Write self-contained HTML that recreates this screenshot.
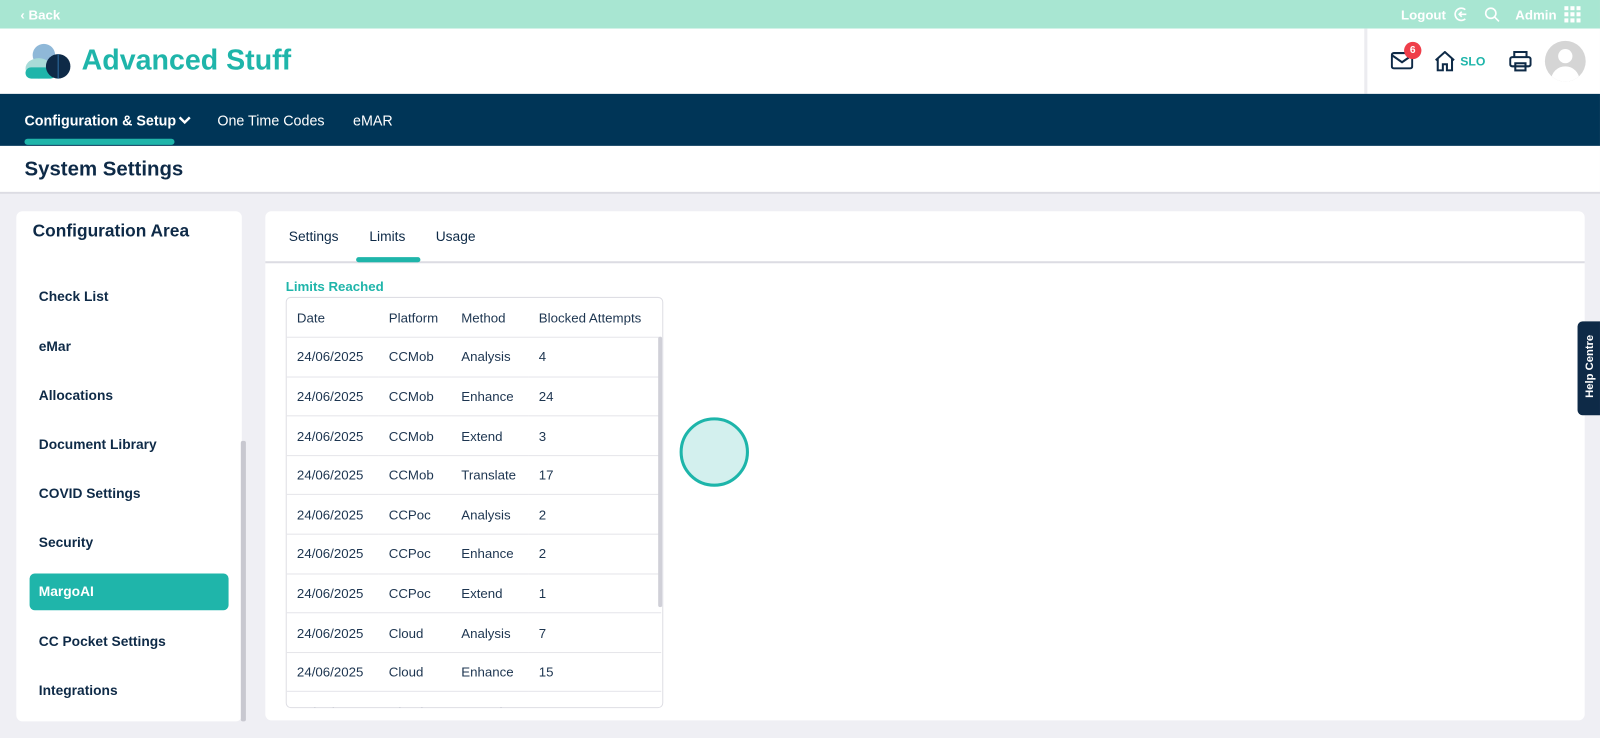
<!DOCTYPE html>
<html><head><meta charset="utf-8"><style>
*{margin:0;padding:0;box-sizing:border-box}
html,body{width:1600px;height:737px;overflow:hidden;background:#efeff4}
#w{position:absolute;left:0;top:0;width:1568px;height:723px;transform:scale(1.0204);transform-origin:0 0;overflow:hidden;font-family:"Liberation Sans",sans-serif;color:#0e2a47}
.abs{position:absolute}
.top{left:0;top:0;width:1568px;height:28px;background:#a8e6d2;color:#fff;font-size:13px;font-weight:bold}
.hdr{left:0;top:28px;width:1568px;height:64px;background:#fff}
.nav{left:0;top:92px;width:1568px;height:51px;background:#003557;color:#fff;font-size:14px;font-weight:bold}
.title{left:0;top:143px;width:1568px;height:47px;background:#fff;border-bottom:2px solid #dcdce3}
.card{background:#fff;border-radius:6px}
.si{position:absolute;left:38px;font-size:13.5px;font-weight:bold;color:#0e2a47}
table{border-collapse:collapse;font-size:13px;color:#1d3550}
td{height:38.6px;border-bottom:1px solid #e5e5ea;padding-left:10px;white-space:nowrap}
</style></head><body><div id="w">
<div class="abs" style="left:0;top:0;width:1568px;height:723px;background:#efeff4"></div>
<div class="abs top">
 <span class="abs" style="left:20px;top:7px">‹ Back</span>
 <span class="abs" style="left:1373px;top:7px">Logout</span>
 <svg class="abs" style="left:1424px;top:6px" width="16" height="16" viewBox="0 0 16 16" fill="none" stroke="#fff" stroke-width="1.6"><path d="M12 3.5A6 6 0 1 0 12 12.5"/><path d="M13 8H6M8.5 5.5L6 8l2.5 2.5"/></svg>
 <svg class="abs" style="left:1454px;top:6px" width="16" height="16" viewBox="0 0 16 16" fill="none" stroke="#fff" stroke-width="1.6"><circle cx="7" cy="7" r="5"/><path d="M11 11l4 4"/></svg>
 <span class="abs" style="left:1485px;top:7px">Admin</span>
 <svg class="abs" style="left:1533px;top:6px" width="16" height="16" fill="#fff"><rect x="0" y="0" width="4" height="4"/><rect x="6" y="0" width="4" height="4"/><rect x="12" y="0" width="4" height="4"/><rect x="0" y="6" width="4" height="4"/><rect x="6" y="6" width="4" height="4"/><rect x="12" y="6" width="4" height="4"/><rect x="0" y="12" width="4" height="4"/><rect x="6" y="12" width="4" height="4"/><rect x="12" y="12" width="4" height="4"/></svg>
</div>
<div class="abs hdr">
 <svg class="abs" style="left:24px;top:14px" width="48" height="36" viewBox="0 0 48 36"><ellipse cx="19" cy="12" rx="11" ry="11" fill="#8fb8d8"/><ellipse cx="14" cy="25" rx="13" ry="10" fill="#a8dbd8"/><rect x="1" y="24" width="30" height="11" rx="5.5" fill="#1fb5aa"/><circle cx="33" cy="23" r="12" fill="#0e2a47"/><path d="M33 11v24" stroke="#2f6fa5" stroke-width="1"/></svg>
 <div class="abs" style="left:80px;top:15px;font-size:28px;font-weight:bold;color:#1fb5aa">Advanced Stuff</div>
 <div class="abs" style="left:1337px;top:0;width:3px;height:64px;background:#ececf0"></div>
 <svg class="abs" style="left:1363px;top:22px" width="22" height="18" viewBox="0 0 22 18" fill="none" stroke="#0e2a47" stroke-width="2"><rect x="1" y="2" width="20" height="15" rx="2"/><path d="M1 4l10 7 10-7"/></svg>
 <div class="abs" style="left:1376px;top:13px;width:17px;height:17px;border-radius:50%;background:#ef3e4a;color:#fff;font-size:10px;font-weight:bold;text-align:center;line-height:17px">6</div>
 <svg class="abs" style="left:1405px;top:22px" width="22" height="20" viewBox="0 0 22 20" fill="none" stroke="#0e2a47" stroke-width="2"><path d="M2 9L11 1l9 8M4 7v12h5v-6h4v6h5V7"/></svg>
 <div class="abs" style="left:1431px;top:25px;font-size:12px;font-weight:bold;color:#1fb5aa">SLO</div>
 <svg class="abs" style="left:1479px;top:21px" width="22" height="22" viewBox="0 0 22 22" fill="none" stroke="#0e2a47" stroke-width="2"><path d="M5 7V2h12v5"/><rect x="1" y="7" width="20" height="9" rx="2"/><rect x="6" y="13" width="10" height="7"/></svg>
 <div class="abs" style="left:1514px;top:12px;width:40px;height:40px;border-radius:50%;background:#d5d5d5;overflow:hidden"><div class="abs" style="left:13px;top:8px;width:14px;height:14px;border-radius:50%;background:#fff"></div><div class="abs" style="left:6px;top:25px;width:28px;height:20px;border-radius:14px 14px 0 0;background:#fff"></div></div>
</div>
<div class="abs nav">
 <span class="abs" style="left:24px;top:18px">Configuration &amp; Setup</span>
 <svg class="abs" style="left:175px;top:21px" width="12" height="10" fill="none" stroke="#fff" stroke-width="2.4"><path d="M1 2l5 5 5-5"/></svg>
 <div class="abs" style="left:24px;top:44px;width:147px;height:6px;border-radius:3px;background:#1fb5aa"></div>
 <span class="abs" style="left:213px;top:18px;font-weight:normal">One Time Codes</span>
 <span class="abs" style="left:346px;top:18px;font-weight:normal">eMAR</span>
</div>
<div class="abs title"><div class="abs" style="left:24px;top:12px;font-size:20px;font-weight:bold;color:#0e2a47">System Settings</div></div>

<div class="abs card" style="left:16px;top:207px;width:221px;height:500px;overflow:hidden">
 <div class="abs" style="left:16px;top:10px;font-size:17px;font-weight:bold">Configuration Area</div>
</div>
<div class="abs" style="left:236px;top:432px;width:5px;height:275px;background:#c8c8d0;border-radius:2px"></div>
<div class="abs" style="left:29px;top:562px;width:195px;height:36px;border-radius:5px;background:#1fb5aa"></div>
<span class="si" style="top:283px">Check List</span>
<span class="si" style="top:332px">eMar</span>
<span class="si" style="top:380px">Allocations</span>
<span class="si" style="top:428px">Document Library</span>
<span class="si" style="top:476px">COVID Settings</span>
<span class="si" style="top:524px">Security</span>
<span class="si" style="top:572px;color:#fff">MargoAI</span>
<span class="si" style="top:621px">CC Pocket Settings</span>
<span class="si" style="top:669px">Integrations</span>

<div class="abs card" style="left:260px;top:207px;width:1293px;height:499px">
 <div class="abs" style="left:0;top:49px;width:1293px;height:2px;background:#dcdce3"></div>
 <span class="abs" style="left:23px;top:17px;font-size:13.5px">Settings</span>
 <span class="abs" style="left:102px;top:17px;font-size:13.5px">Limits</span>
 <span class="abs" style="left:167px;top:17px;font-size:13.5px">Usage</span>
 <div class="abs" style="left:89px;top:45px;width:63px;height:5px;border-radius:3px;background:#1fb5aa"></div>
 <div class="abs" style="left:20px;top:66px;font-size:13px;font-weight:bold;color:#1fb5aa">Limits Reached</div>
 <div class="abs" style="left:20px;top:84px;width:370px;height:403px;border:1px solid #dedee4;border-radius:5px;overflow:hidden">
  <div class="abs" style="left:364px;top:38px;width:4px;height:265px;background:#d0d0d8;border-radius:2px"></div>
  <table>
   <tr><td style="width:90px">Date</td><td style="width:71px">Platform</td><td style="width:76px">Method</td><td style="width:130px">Blocked Attempts</td></tr>
   <tr><td>24/06/2025</td><td>CCMob</td><td>Analysis</td><td>4</td></tr>
   <tr><td>24/06/2025</td><td>CCMob</td><td>Enhance</td><td>24</td></tr>
   <tr><td>24/06/2025</td><td>CCMob</td><td>Extend</td><td>3</td></tr>
   <tr><td>24/06/2025</td><td>CCMob</td><td>Translate</td><td>17</td></tr>
   <tr><td>24/06/2025</td><td>CCPoc</td><td>Analysis</td><td>2</td></tr>
   <tr><td>24/06/2025</td><td>CCPoc</td><td>Enhance</td><td>2</td></tr>
   <tr><td>24/06/2025</td><td>CCPoc</td><td>Extend</td><td>1</td></tr>
   <tr><td>24/06/2025</td><td>Cloud</td><td>Analysis</td><td>7</td></tr>
   <tr><td>24/06/2025</td><td>Cloud</td><td>Enhance</td><td>15</td></tr>
   <tr><td>24/06/2025</td><td>Cloud</td><td>Extend</td><td>1</td></tr>
  </table>
 </div>
</div>
<div class="abs" style="left:666px;top:409px;width:68px;height:68px;border-radius:50%;background:#d3f0ee;border:3px solid #1db5aa"></div>
<div class="abs" style="left:1546px;top:315px;width:24px;height:92px;background:#0e2a47;border-radius:5px 0 0 5px"><div class="abs" style="left:-28px;top:38px;width:80px;transform:rotate(-90deg);color:#fff;font-size:11px;font-weight:bold;text-align:center">Help Centre</div></div>
</div></body></html>
